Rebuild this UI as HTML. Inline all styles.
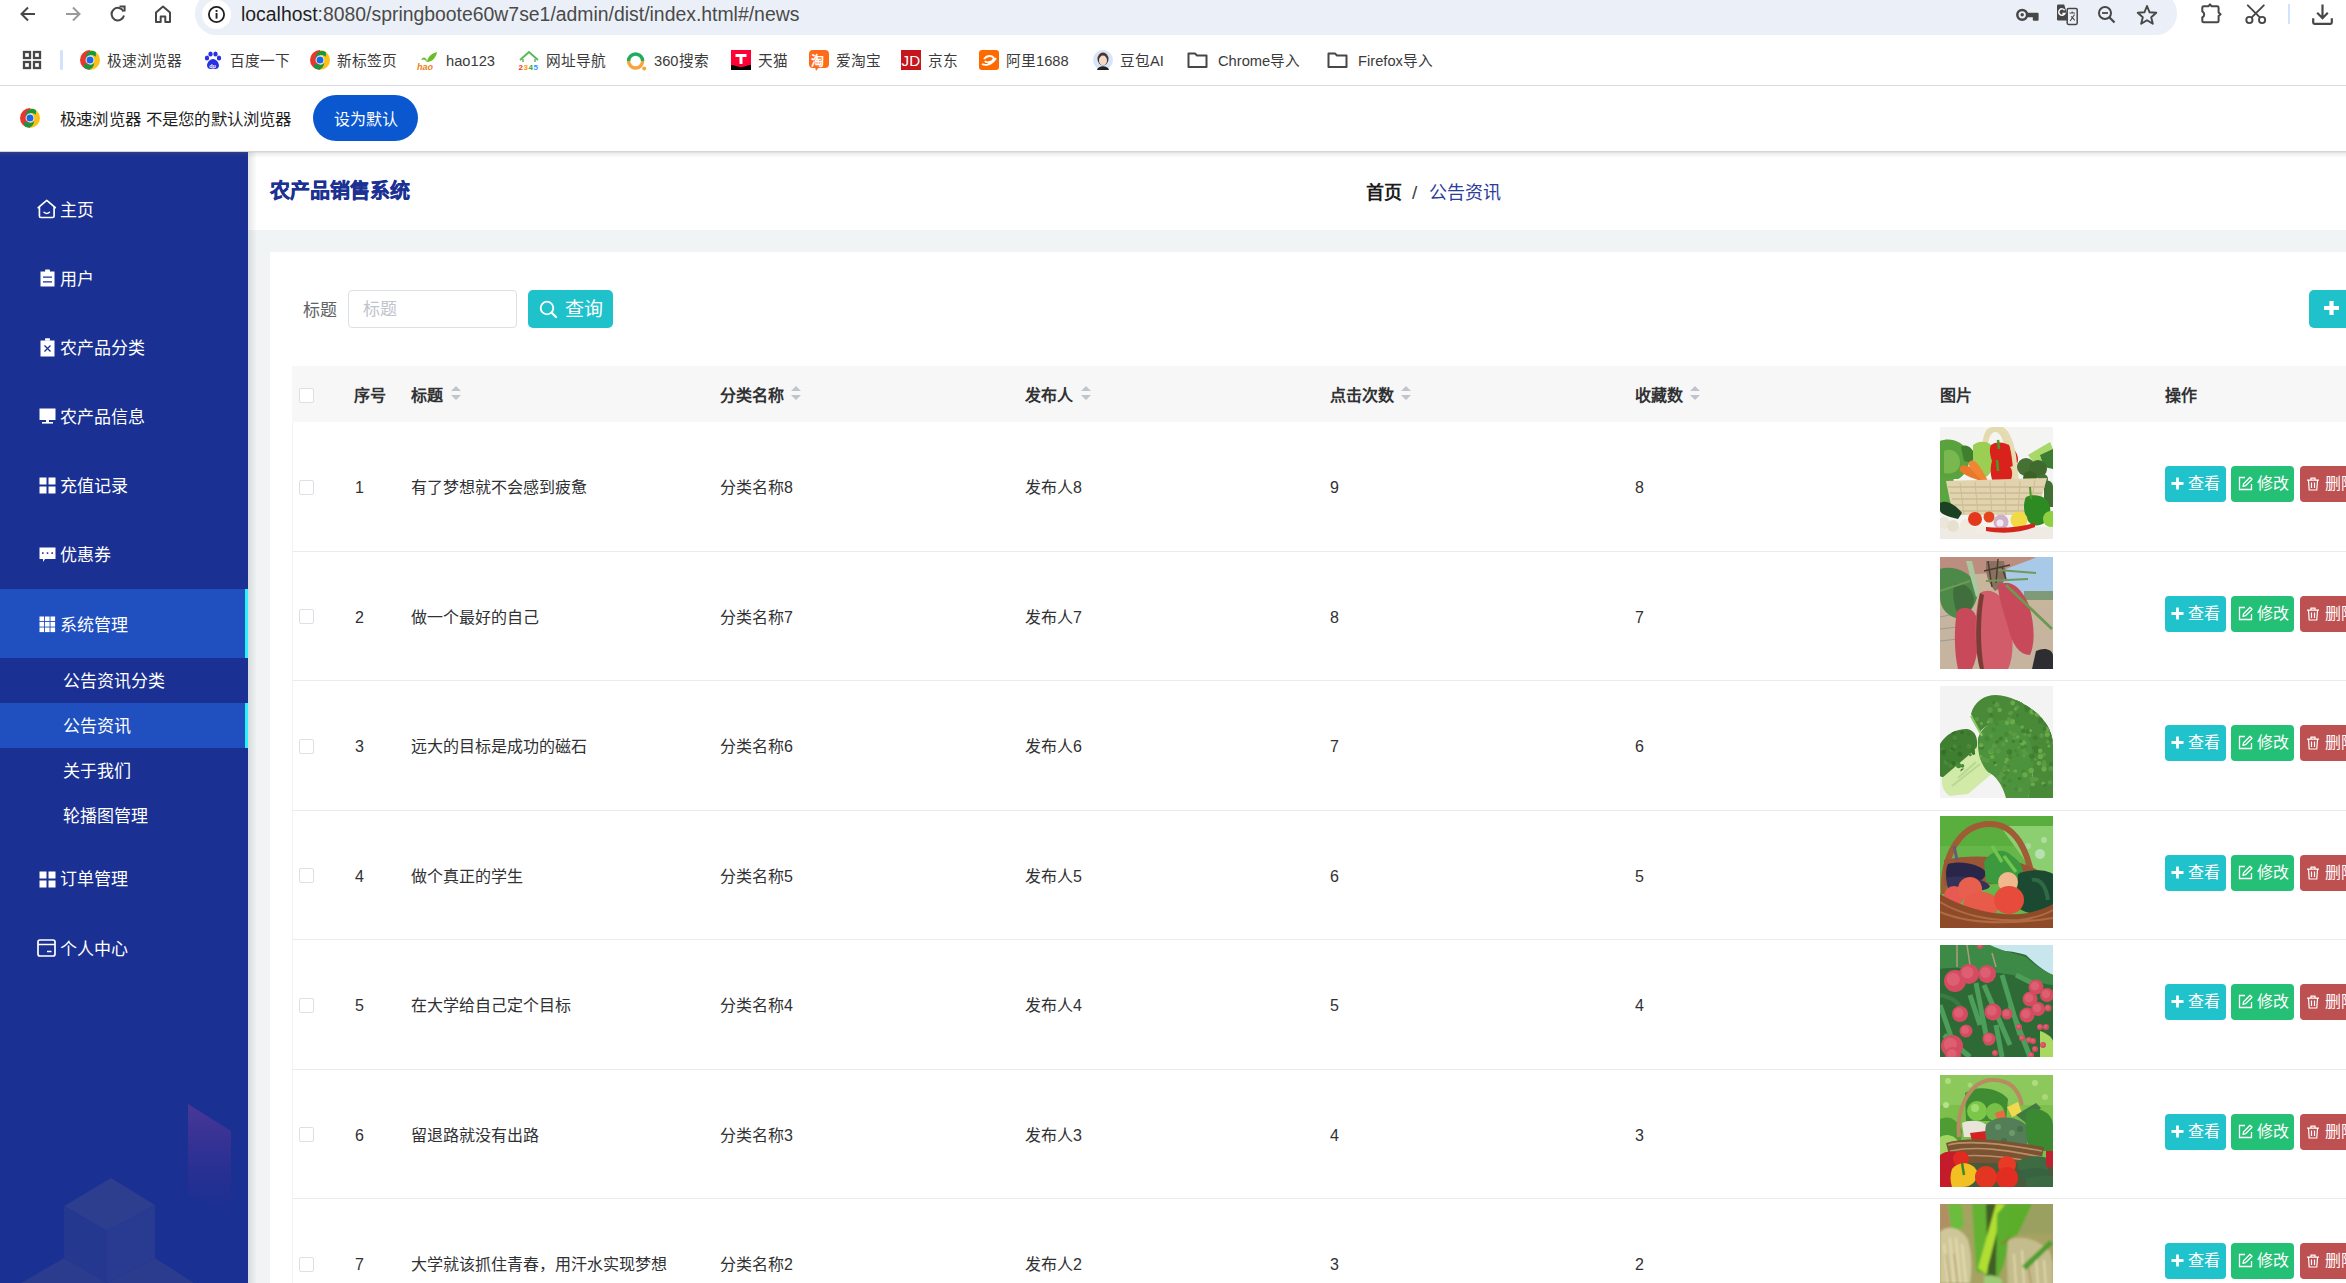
<!DOCTYPE html><html lang="zh-CN"><head><meta charset="utf-8"><title>news</title><style>
*{box-sizing:border-box;margin:0;padding:0}
html,body{width:2346px;height:1283px;overflow:hidden;background:#fff;font-family:"Liberation Sans",sans-serif;position:relative}
.a{position:absolute;white-space:nowrap}
svg{display:block}
#urlbar{left:195px;top:-8px;width:1982px;height:43px;background:#ebf0f8;border-radius:21px}
#infoc{left:202px;top:0px;width:29px;height:29px;border-radius:50%;background:#fff}
#url{left:241px;top:2px;font-size:19.4px;color:#2a2a2a;line-height:24px}
#bmline{left:0;top:85px;width:2346px;height:1px;background:#dadce0}
.bm{top:50.5px;font-size:14.7px;color:#3b3b3b;line-height:20px}
#infotxt{left:60px;top:107.5px;font-size:16.45px;letter-spacing:0.2px;color:#1f1f1f;line-height:22px}
#setdef{left:313px;top:95px;width:105px;height:46px;border-radius:23px;background:#0b57d0;color:#fff;font-size:16px;line-height:49px;text-align:center;overflow:hidden}
#shadow{left:0;top:151px;width:2346px;height:7px;background:linear-gradient(rgba(110,110,110,0.32),rgba(110,110,110,0.12) 35%,rgba(110,110,110,0))}
#side{left:0;top:152px;width:248px;height:1131px;background:#1a3092;overflow:hidden}
.mt{color:#fff;font-size:17px;line-height:22px}
#gray{left:248px;top:230px;width:2098px;height:1053px;background:#f1f4f5}
#hdr{left:248px;top:152px;width:2098px;height:78px;background:#fff}
#card{left:270px;top:252px;width:2076px;height:1031px;background:#fff}
#sideshadow{left:248px;top:152px;width:9px;height:1131px;background:linear-gradient(90deg,rgba(0,0,0,0.10),rgba(0,0,0,0))}
#title{left:270px;top:178px;font-size:20px;font-weight:900;color:#1b3193;line-height:26px;-webkit-text-stroke:0.45px #1b3193}
#bc{left:1366px;top:181px;font-size:18px;line-height:24px}
#inp{left:348px;top:290px;width:169px;height:38px;border:1px solid #dcdfe6;border-radius:4px;background:#fff}
.tbtn{background:#1fc2cb;border-radius:5px}
#thead{left:292px;top:366px;width:2054px;height:56px;background:#f7f7f7}
#tleft{left:292px;top:422px;width:1px;height:861px;background:#f2f2f2}
.th{top:385px;font-size:16px;font-weight:bold;color:#303133;line-height:22px}
.cb{width:15px;height:15px;border:1px solid #dcdfe6;border-radius:2px;background:#fff}
.rl{left:292px;width:2054px;height:1px;background:#ebebeb}
.td{font-size:16px;color:#303133;line-height:22px}
.ob{height:36px;border-radius:4px;color:#fff;font-size:16px;line-height:36px}
.ob1{background:#20c3cc;width:61px}
.ob2{background:#24c076;width:63px}
.ob3{background:#bd5151;width:60px}
.pic{width:113px;height:112px;overflow:hidden}
</style></head><body>
<div class="a" id="urlbar"></div>
<div class="a" id="infoc"></div>
<svg class="a" style="left:18px;top:4px" width="20" height="20" viewBox="0 0 20 20"><path d="M17 10H4M10 3.5L3.5 10L10 16.5" stroke="#474747" stroke-width="2" fill="none"/></svg>
<svg class="a" style="left:63px;top:4px" width="20" height="20" viewBox="0 0 20 20"><path d="M3 10H16M10 3.5L16.5 10L10 16.5" stroke="#9a9a9a" stroke-width="2" fill="none"/></svg>
<svg class="a" style="left:108px;top:4px" width="20" height="20" viewBox="0 0 20 20"><path d="M15.6 7.5A6.3 6.3 0 1 0 16 11.5" stroke="#474747" stroke-width="2" fill="none"/><path d="M11.5 2.5H16.6V7.6" stroke="#474747" stroke-width="2" fill="none"/></svg>
<svg class="a" style="left:153px;top:4px" width="20" height="20" viewBox="0 0 20 20"><path d="M3 18V8.5L10 2.5L17 8.5V18H12.3V12.5H7.7V18Z" stroke="#474747" stroke-width="2" fill="none" stroke-linejoin="round"/></svg>
<svg class="a" style="left:207px;top:5px" width="19" height="19" viewBox="0 0 19 19"><circle cx="9.5" cy="9.5" r="7.6" stroke="#1f1f1f" stroke-width="1.8" fill="none"/><rect x="8.6" y="8" width="1.9" height="5.6" fill="#1f1f1f"/><rect x="8.6" y="5" width="1.9" height="1.9" fill="#1f1f1f"/></svg>
<div class="a" id="url"><span style="color:#1f1f1f">localhost</span><span style="color:#4a4a4a">:8080/springboote60w7se1/admin/dist/index.html#/news</span></div>
<svg class="a" style="left:2015px;top:5px" width="26" height="20" viewBox="0 0 26 20"><circle cx="7.2" cy="9.8" r="4.9" stroke="#474747" stroke-width="2.5" fill="none"/><circle cx="7.2" cy="9.8" r="1.7" fill="#474747"/><path d="M11.5 7.7H22.6Q23.6 7.7 23.6 8.7V14.7Q23.6 15.7 22.6 15.7H18.8Q17.8 15.7 17.8 14.7V12.2H11.5Z" fill="#474747"/></svg>
<svg class="a" style="left:2056px;top:4px" width="22" height="24" viewBox="0 0 22 24"><path d="M2.2 0.6H8.2L13 16.4H2.2Q1 16.4 1 15.2V1.8Q1 0.6 2.2 0.6Z" fill="#474747"/><path d="M8.6 6.2A3.2 3.2 0 1 0 8.8 9.6H6.4" stroke="#fff" stroke-width="1.5" fill="none"/><rect x="11.2" y="4.4" width="10" height="16" rx="1.3" stroke="#474747" stroke-width="1.5" fill="#ebf0f8"/><path d="M13.5 9H19M16.2 7.6V9M14.2 17L18.5 10.5M15.2 12.4L18.8 16.4" stroke="#474747" stroke-width="1.1" fill="none"/></svg>
<svg class="a" style="left:2097px;top:5px" width="20" height="20" viewBox="0 0 20 20"><circle cx="8" cy="8" r="6" stroke="#474747" stroke-width="2" fill="none"/><path d="M12.3 12.3L17.5 17.5" stroke="#474747" stroke-width="2.2"/><path d="M5 8H11" stroke="#474747" stroke-width="1.8"/></svg>
<svg class="a" style="left:2136px;top:4px" width="22" height="22" viewBox="0 0 22 22"><path d="M11 2L13.6 8.3L20.3 8.8L15.2 13.2L16.8 19.8L11 16.3L5.2 19.8L6.8 13.2L1.7 8.8L8.4 8.3Z" stroke="#474747" stroke-width="1.9" fill="none" stroke-linejoin="round"/></svg>
<svg class="a" style="left:2199px;top:2px" width="24" height="22" viewBox="0 0 24 22"><path d="M4.7 4.3H9.3L11 2.3L12.7 4.3H18.2Q19.6 4.3 19.6 5.7V10.6L21.6 12.3L19.6 14V18.9Q19.6 20.3 18.2 20.3H4.7Q3.3 20.3 3.3 18.9V15.4Q5.2 14.2 5.2 12.4Q5.2 10.6 3.3 9.4V5.7Q3.3 4.3 4.7 4.3Z" stroke="#474747" stroke-width="2" fill="none" stroke-linejoin="round"/></svg>
<svg class="a" style="left:2243px;top:3px" width="25" height="23" viewBox="0 0 25 23"><path d="M4.8 2.3L16.6 14.1M20.8 2.3L9 14.1" stroke="#474747" stroke-width="1.9" stroke-linecap="round"/><circle cx="6.4" cy="17" r="3.1" stroke="#474747" stroke-width="1.9" fill="none"/><circle cx="19.1" cy="17" r="3.1" stroke="#474747" stroke-width="1.9" fill="none"/></svg>
<div class="a" style="left:2288px;top:4px;width:2px;height:20px;background:#d3e3fd"></div>
<svg class="a" style="left:2311px;top:3px" width="23" height="23" viewBox="0 0 23 23"><path d="M11.5 1.5V15M6.2 9.8L11.5 15.2L16.8 9.8" stroke="#474747" stroke-width="2.2" fill="none"/><path d="M2.2 15.2V19.6Q2.2 20.9 3.5 20.9H19.5Q20.8 20.9 20.8 19.6V15.2" stroke="#474747" stroke-width="2.2" fill="none"/></svg>
<svg class="a" style="left:22px;top:50px" width="20" height="20" viewBox="0 0 20 20"><g stroke="#474747" stroke-width="2.3" fill="none"><rect x="2" y="2" width="6" height="6"/><rect x="12" y="2" width="6" height="6"/><rect x="2" y="12" width="6" height="6"/><rect x="12" y="12" width="6" height="6"/></g></svg>
<div class="a" style="left:60px;top:50px;width:2.5px;height:20px;background:#d3e3fd;border-radius:1px"></div>
<svg class="a" style="left:80px;top:50px" width="20" height="20" viewBox="0 0 20 20"><path d="M10 0A10 10 0 0 0 10 20Z" fill="#e8372c"/><path d="M10 0A10 10 0 0 1 10 20Z" fill="#fbc118"/><path d="M5.6 9.4C5.4 5 7.5 2 11 1.1C13 0.7 15.2 1.4 16 2.4L15.8 6.8C14 5.2 11.5 4.6 9.5 5.2C7.8 5.8 6.4 7.5 5.6 9.4Z" fill="#109a47"/><path d="M4.2 13.2L4.4 17.9C6.5 19.4 9.5 19.6 11.4 18.5C13 17 14 15 14.3 12.9C13 14.2 11.5 14.7 10 14.7C8 14.7 6 14.2 4.2 13.2Z" fill="#109a47"/><circle cx="10" cy="10" r="4.4" fill="#fff"/><circle cx="10" cy="10" r="3.5" fill="#1a68e6"/></svg>
<div class="a bm" style="left:107px">极速浏览器</div>
<svg class="a" style="left:204px;top:51px" width="18" height="19" viewBox="0 0 18 19"><g fill="#2932e1"><ellipse cx="3" cy="7" rx="2.2" ry="2.6"/><ellipse cx="6.5" cy="3" rx="2.2" ry="2.6"/><ellipse cx="11.5" cy="3" rx="2.2" ry="2.6"/><ellipse cx="15" cy="7" rx="2.2" ry="2.6"/><path d="M9 8C5.5 8 3 12 3 14.5C3 17 5 18 6.5 18C7.5 18 8.2 17.6 9 17.6C9.8 17.6 10.5 18 11.5 18C13 18 15 17 15 14.5C15 12 12.5 8 9 8Z"/></g><text x="5.2" y="16.5" font-size="5.5" fill="#fff" font-family="Liberation Sans" font-weight="bold">du</text></svg>
<div class="a bm" style="left:230px">百度一下</div>
<svg class="a" style="left:310px;top:50px" width="20" height="20" viewBox="0 0 20 20"><path d="M10 0A10 10 0 0 0 10 20Z" fill="#e8372c"/><path d="M10 0A10 10 0 0 1 10 20Z" fill="#fbc118"/><path d="M5.6 9.4C5.4 5 7.5 2 11 1.1C13 0.7 15.2 1.4 16 2.4L15.8 6.8C14 5.2 11.5 4.6 9.5 5.2C7.8 5.8 6.4 7.5 5.6 9.4Z" fill="#109a47"/><path d="M4.2 13.2L4.4 17.9C6.5 19.4 9.5 19.6 11.4 18.5C13 17 14 15 14.3 12.9C13 14.2 11.5 14.7 10 14.7C8 14.7 6 14.2 4.2 13.2Z" fill="#109a47"/><circle cx="10" cy="10" r="4.4" fill="#fff"/><circle cx="10" cy="10" r="3.5" fill="#1a68e6"/></svg>
<div class="a bm" style="left:337px">新标签页</div>
<svg class="a" style="left:417px;top:50px" width="21" height="20" viewBox="0 0 21 20"><path d="M4 10C6 6 9 7 10 11C12 5 16 3 20 2C19 8 15 12 10 12C8 9 6 9 4 10Z" fill="#6bbd2b"/><text x="0" y="19.5" font-size="9" font-style="italic" font-weight="bold" fill="#f07d1a" font-family="Liberation Sans">hao</text></svg>
<div class="a bm" style="left:446px">hao123</div>
<svg class="a" style="left:518px;top:50px" width="22" height="21" viewBox="0 0 22 21"><path d="M2 10L11 2L20 10" stroke="#5cb85c" stroke-width="2" fill="none"/><path d="M5 9V12M17 9V12" stroke="#5cb85c" stroke-width="1.5"/><text x="0.5" y="20" font-size="8" font-weight="bold" fill="#e33" font-family="Liberation Sans">2</text><text x="5.5" y="20" font-size="8" font-weight="bold" fill="#f90" font-family="Liberation Sans">3</text><text x="10.5" y="20" font-size="8" font-weight="bold" fill="#3a3" font-family="Liberation Sans">4</text><text x="15.5" y="20" font-size="8" font-weight="bold" fill="#39f" font-family="Liberation Sans">5</text></svg>
<div class="a bm" style="left:546px">网址导航</div>
<svg class="a" style="left:626px;top:51px" width="21" height="21" viewBox="0 0 21 21"><path d="M2.6 10A7 7 0 0 1 16.6 10" stroke="#1fae5c" stroke-width="3.4" fill="none"/><path d="M16.6 10A7 7 0 0 1 2.6 10" stroke="#f7a43a" stroke-width="3.4" fill="none"/><circle cx="18.2" cy="17.6" r="2" fill="#f7a43a"/></svg>
<div class="a bm" style="left:654px">360搜索</div>
<svg class="a" style="left:731px;top:50px" width="20" height="20" viewBox="0 0 20 20"><rect width="20" height="20" fill="#ff0036"/><path d="M0 15C4 15 6 17 10 17C14 17 16 15 20 15V20H0Z" fill="#000"/><path d="M4.5 4H15.5V7H11.5V14H8.5V7H4.5Z" fill="#fff"/></svg>
<div class="a bm" style="left:758px">天猫</div>
<svg class="a" style="left:809px;top:50px" width="20" height="21" viewBox="0 0 20 21"><rect x="0" y="0" width="20" height="18" rx="4" fill="#ff6a1b"/><path d="M6 17L7 21L10 17Z" fill="#ff6a1b"/><text x="2" y="14.5" font-size="13" font-weight="bold" fill="#fff">淘</text></svg>
<div class="a bm" style="left:836px">爱淘宝</div>
<svg class="a" style="left:901px;top:50px" width="20" height="20" viewBox="0 0 20 20"><rect width="20" height="20" fill="#c4161c"/><text x="0.6" y="16.2" font-size="14.5" fill="#fff" font-family="Liberation Sans" textLength="18.5" lengthAdjust="spacingAndGlyphs">JD</text></svg>
<div class="a bm" style="left:928px">京东</div>
<svg class="a" style="left:979px;top:50px" width="20" height="20" viewBox="0 0 20 20"><rect width="20" height="20" rx="3" fill="#ff6a00"/><path d="M3 14C6 16 13 15 17 8M5 9C8 5 14 5 15 9C12 13 7 13 6 11" stroke="#fff" stroke-width="1.8" fill="none"/></svg>
<div class="a bm" style="left:1006px">阿里1688</div>
<svg class="a" style="left:1093px;top:50px" width="20" height="20" viewBox="0 0 20 20"><circle cx="10" cy="10" r="10" fill="#d5e6fa"/><ellipse cx="10" cy="9" rx="5.5" ry="6.5" fill="#4a3328"/><ellipse cx="10" cy="10.5" rx="4" ry="5" fill="#f3d9c8"/><path d="M4 20C5 15 15 15 16 20Z" fill="#222"/></svg>
<div class="a bm" style="left:1120px">豆包AI</div>
<svg class="a" style="left:1187px;top:51px" width="21" height="18" viewBox="0 0 21 18"><path d="M1.5 2.5H8L10 4.5H19.5V16H1.5Z" stroke="#474747" stroke-width="2" fill="none" stroke-linejoin="round"/></svg>
<div class="a bm" style="left:1218px">Chrome导入</div>
<svg class="a" style="left:1327px;top:51px" width="21" height="18" viewBox="0 0 21 18"><path d="M1.5 2.5H8L10 4.5H19.5V16H1.5Z" stroke="#474747" stroke-width="2" fill="none" stroke-linejoin="round"/></svg>
<div class="a bm" style="left:1358px">Firefox导入</div>
<div class="a" id="bmline"></div>
<svg class="a" style="left:20px;top:108px" width="20" height="20" viewBox="0 0 20 20"><path d="M10 0A10 10 0 0 0 10 20Z" fill="#e8372c"/><path d="M10 0A10 10 0 0 1 10 20Z" fill="#fbc118"/><path d="M5.6 9.4C5.4 5 7.5 2 11 1.1C13 0.7 15.2 1.4 16 2.4L15.8 6.8C14 5.2 11.5 4.6 9.5 5.2C7.8 5.8 6.4 7.5 5.6 9.4Z" fill="#109a47"/><path d="M4.2 13.2L4.4 17.9C6.5 19.4 9.5 19.6 11.4 18.5C13 17 14 15 14.3 12.9C13 14.2 11.5 14.7 10 14.7C8 14.7 6 14.2 4.2 13.2Z" fill="#109a47"/><circle cx="10" cy="10" r="4.4" fill="#fff"/><circle cx="10" cy="10" r="3.5" fill="#1a68e6"/></svg>
<div class="a" id="infotxt">极速浏览器 不是您的默认浏览器</div>
<div class="a" id="setdef">设为默认</div>
<div class="a" id="gray"></div>
<div class="a" id="hdr"></div>
<div class="a" id="card"></div>
<div class="a" id="side"><svg class="a" style="left:0;top:0" width="248" height="1131" viewBox="0 152 248 1131">
<defs><linearGradient id="pg" x1="0" y1="0" x2="0" y2="1"><stop offset="0" stop-color="#5a3a9a" stop-opacity="0.75"/><stop offset="1" stop-color="#3a2a90" stop-opacity="0"/></linearGradient></defs>
<path d="M188 1104L231 1131V1218L188 1195Z" fill="url(#pg)"/>
<path d="M111 1178L155 1205L107 1231L64 1206Z" fill="#2d3e8e"/>
<path d="M64 1206L107 1231V1283L64 1258Z" fill="#25388f"/>
<path d="M107 1231L155 1205V1258L107 1283Z" fill="#293b90"/>
<path d="M21 1283L64 1258L107 1283Z" fill="#2b3c8e"/>
<path d="M107 1283L155 1258L194 1283Z" fill="#2b3c8e"/>
</svg><div class="a" style="left:0;top:437px;width:248px;height:69px;background:#2050c0"></div><div class="a" style="left:245px;top:437px;width:3px;height:69px;background:#2af2f8"></div><div class="a" style="left:0;top:551px;width:248px;height:45px;background:#2050c0"></div><div class="a" style="left:245px;top:551px;width:3px;height:45px;background:#2af2f8"></div><div class="a" style="left:37.3px;top:47px"><svg width="19.5" height="19.5" viewBox="0 0 21 21"><path d="M1.3 9.3L10.5 1.4L19.7 9.3M2.6 8.3V18.3Q2.6 19.9 4.2 19.9H16.8Q18.4 19.9 18.4 18.3V8.3" stroke="#fff" stroke-width="1.8" fill="none" stroke-linejoin="round" stroke-linecap="round"/><path d="M7.6 14.3Q10.5 16.9 13.4 14.3" stroke="#fff" stroke-width="1.7" fill="none" stroke-linecap="round"/></svg></div><div class="a mt" style="left:60px;top:48px">主页</div><div class="a" style="left:39px;top:117px"><svg width="17" height="18" viewBox="0 0 17 18"><path d="M1.5 2.5H15.5V17.5H1.5Z" fill="#fff"/><rect x="6" y="0.5" width="5" height="2.5" rx="0.8" fill="#fff"/><path d="M4 8.2H13M4 12.8H13" stroke="#1a3092" stroke-width="1.3"/></svg></div><div class="a mt" style="left:60px;top:117px">用户</div><div class="a" style="left:39px;top:186px"><svg width="17" height="19" viewBox="0 0 17 19"><path d="M1.5 2.5H15.5V18.5H1.5Z" fill="#fff"/><rect x="6" y="0.3" width="5" height="2.5" rx="0.8" fill="#fff"/><path d="M5.5 7.5L11.5 13.5M11.5 7.5L5.5 13.5" stroke="#1a3092" stroke-width="1.3"/></svg></div><div class="a mt" style="left:60px;top:186px">农产品分类</div><div class="a" style="left:39px;top:256px"><svg width="17" height="17" viewBox="0 0 17 17"><rect x="0.5" y="0.5" width="16" height="11.5" fill="#fff"/><rect x="7" y="12" width="3" height="2" fill="#fff"/><rect x="3" y="14" width="11" height="1.6" fill="#fff"/></svg></div><div class="a mt" style="left:60px;top:255px">农产品信息</div><div class="a" style="left:39px;top:325px"><svg width="17" height="17" viewBox="0 0 17 17"><g fill="#fff"><rect x="0.5" y="0.5" width="7" height="7"/><rect x="9.5" y="0.5" width="7" height="7"/><rect x="0.5" y="9.5" width="7" height="7"/><rect x="9.5" y="9.5" width="7" height="7"/></g></svg></div><div class="a mt" style="left:60px;top:324px">充值记录</div><div class="a" style="left:39px;top:395px"><svg width="17" height="17" viewBox="0 0 17 17"><path d="M0.5 0.5H16.5V12H6L4 15V12H0.5Z" fill="#fff"/><g fill="#1a3092"><rect x="3" y="5.3" width="1.6" height="1.6"/><rect x="7.7" y="5.3" width="1.6" height="1.6"/><rect x="12.4" y="5.3" width="1.6" height="1.6"/></g></svg></div><div class="a mt" style="left:60px;top:393px">优惠券</div><div class="a" style="left:39px;top:464px"><svg width="17" height="17" viewBox="0 0 17 17"><g fill="#fff"><rect x="0.5" y="0.5" width="4.6" height="4.6"/><rect x="0.5" y="6.0" width="4.6" height="4.6"/><rect x="0.5" y="11.5" width="4.6" height="4.6"/><rect x="6.0" y="0.5" width="4.6" height="4.6"/><rect x="6.0" y="6.0" width="4.6" height="4.6"/><rect x="6.0" y="11.5" width="4.6" height="4.6"/><rect x="11.5" y="0.5" width="4.6" height="4.6"/><rect x="11.5" y="6.0" width="4.6" height="4.6"/><rect x="11.5" y="11.5" width="4.6" height="4.6"/></g></svg></div><div class="a mt" style="left:60px;top:463px">系统管理</div><div class="a mt" style="left:63px;top:519px">公告资讯分类</div><div class="a mt" style="left:63px;top:564px">公告资讯</div><div class="a mt" style="left:63px;top:609px">关于我们</div><div class="a mt" style="left:63px;top:654px">轮播图管理</div><div class="a" style="left:39px;top:718.5px"><svg width="17" height="17" viewBox="0 0 17 17"><g fill="#fff"><rect x="0.5" y="0.5" width="7" height="7"/><rect x="9.5" y="0.5" width="7" height="7"/><rect x="0.5" y="9.5" width="7" height="7"/><rect x="9.5" y="9.5" width="7" height="7"/></g></svg></div><div class="a mt" style="left:60px;top:717px">订单管理</div><div class="a" style="left:37px;top:787px"><svg width="19" height="18" viewBox="0 0 19 18"><rect x="1" y="1" width="17" height="16" rx="2" stroke="#fff" stroke-width="1.7" fill="none"/><path d="M1 5.5H18M10 12.5H14.5" stroke="#fff" stroke-width="1.5"/></svg></div><div class="a mt" style="left:60px;top:787px">个人中心</div></div>
<div class="a" id="sideshadow"></div>
<div class="a" id="shadow"></div>
<div class="a" id="title">农产品销售系统</div>
<div class="a" id="bc"><b style="color:#1b1b1b">首页</b><span style="color:#404040;margin:0 12px 0 10px;font-size:19px">/</span><span style="color:#2b3c9c">公告资讯</span></div>
<div class="a" style="left:303px;top:300px;font-size:17px;color:#606266;line-height:22px">标题</div>
<div class="a" id="inp"></div>
<div class="a" style="left:363px;top:298.5px;font-size:17px;color:#c0c4cc;line-height:22px">标题</div>
<div class="a tbtn" style="left:528px;top:290px;width:85px;height:38px"></div>
<svg class="a" style="left:538.5px;top:300px" width="20" height="20" viewBox="0 0 20 20"><circle cx="8" cy="8" r="6.3" stroke="#fff" stroke-width="1.8" fill="none"/><path d="M12.5 12.5L17 17" stroke="#fff" stroke-width="2.2" stroke-linecap="round"/></svg>
<div class="a" style="left:565px;top:298px;font-size:19px;color:#fff;line-height:24px">查询</div>
<div class="a tbtn" style="left:2309px;top:290px;width:60px;height:38px"></div>
<svg class="a" style="left:2324px;top:301px" width="15" height="14" viewBox="0 0 15 14"><path d="M7.5 0V14M0 7H15" stroke="#fff" stroke-width="4.2"/></svg>
<div class="a" id="thead"></div>
<div class="a" id="tleft"></div>
<div class="a cb" style="left:299px;top:388px"></div>
<div class="a th" style="left:354px">序号</div>
<div class="a th" style="left:411px">标题</div>
<svg class="a" style="left:451px;top:386px" width="10" height="15" viewBox="0 0 10 15"><path d="M5 0L10 5H0Z M0 9H10L5 14Z" fill="#c0c4cc"/></svg>
<div class="a th" style="left:720px">分类名称</div>
<svg class="a" style="left:791px;top:386px" width="10" height="15" viewBox="0 0 10 15"><path d="M5 0L10 5H0Z M0 9H10L5 14Z" fill="#c0c4cc"/></svg>
<div class="a th" style="left:1025px">发布人</div>
<svg class="a" style="left:1081px;top:386px" width="10" height="15" viewBox="0 0 10 15"><path d="M5 0L10 5H0Z M0 9H10L5 14Z" fill="#c0c4cc"/></svg>
<div class="a th" style="left:1330px">点击次数</div>
<svg class="a" style="left:1401px;top:386px" width="10" height="15" viewBox="0 0 10 15"><path d="M5 0L10 5H0Z M0 9H10L5 14Z" fill="#c0c4cc"/></svg>
<div class="a th" style="left:1635px">收藏数</div>
<svg class="a" style="left:1690px;top:386px" width="10" height="15" viewBox="0 0 10 15"><path d="M5 0L10 5H0Z M0 9H10L5 14Z" fill="#c0c4cc"/></svg>
<div class="a th" style="left:1940px">图片</div>
<div class="a th" style="left:2165px">操作</div>
<div class="a cb" style="left:299px;top:479.5px"></div>
<div class="a td" style="left:355px;top:477.0px">1</div>
<div class="a td" style="left:411px;top:477.0px">有了梦想就不会感到疲惫</div>
<div class="a td" style="left:720px;top:477.0px">分类名称8</div>
<div class="a td" style="left:1025px;top:477.0px">发布人8</div>
<div class="a td" style="left:1330px;top:477.0px">9</div>
<div class="a td" style="left:1635px;top:477.0px">8</div>
<div class="a pic" style="left:1940px;top:427.0px"><svg width="113" height="112" viewBox="0 0 113 112"><defs><filter id="b1" x="-5%" y="-5%" width="110%" height="110%"><feGaussianBlur stdDeviation="0.6"/></filter></defs><rect width="113" height="112" fill="#f4f4f2"/><g filter="url(#b1)"><rect x="0" y="100" width="113" height="12" fill="#efebe4"/><path d="M43 20C42 8 46 1 52 0H62C68 2 72 10 74 30L78 58H70L66 28C64 12 60 5 55 5C50 6 48 12 48 22Z" fill="#e4dab0"/><path d="M0 14C10 10 22 14 28 24C32 36 26 48 18 52H0Z" fill="#5aa23e"/><path d="M4 24C12 20 20 26 20 36C20 44 12 48 4 46Z" fill="#7ab850"/><path d="M0 50H14L10 82H0Z" fill="#5aa540"/><path d="M21 20C26 16 32 20 35 28L32 36L24 34Z" fill="#3f7f2e"/><path d="M33 18C40 12 52 14 55 24C56 36 52 46 46 50C38 50 33 40 33 30Z" fill="#9acf52"/><path d="M20 40C24 36 30 38 46 52L44 55C34 52 24 48 20 44Z" fill="#e8782a"/><path d="M29 35C33 31 38 34 48 54L45 56C38 50 30 42 29 38Z" fill="#f08636"/><path d="M51 18C56 14 66 15 72 20C78 26 80 34 76 38L70 40C74 44 72 54 68 57H54C50 50 50 40 52 34C50 28 49 22 51 18Z" fill="#d9231a"/><path d="M58 13L59 22M57 33L58 44" stroke="#4a9a2a" stroke-width="2.5"/><path d="M62 2C68 6 72 16 74 30L77 56" stroke="#e6dcb4" stroke-width="4.5" fill="none"/><path d="M88 28L110 15L113 22V30L94 36Z" fill="#a8d86a"/><path d="M100 28L113 22V42L104 40Z" fill="#3d7d33"/><circle cx="86" cy="40" r="9" fill="#466f34"/><circle cx="98" cy="42" r="9" fill="#3f6a2f"/><circle cx="90" cy="51" r="7" fill="#3a6428"/><circle cx="103" cy="52" r="5" fill="#466f34"/><path d="M104 54C110 52 113 56 113 60V80H104Z" fill="#3f7030"/><path d="M6 54L107 51L100 76L90 88H16L10 74Z" fill="#e0d3ae"/><path d="M8 60H105M10 66H102M12 72H100M14 78H96M16 84H92" stroke="#c2b088" stroke-width="1"/><path d="M20 56L24 88M35 55L38 88M50 55L52 88M65 55L66 88M80 54L78 88M95 53L90 84" stroke="#cdbd94" stroke-width="1"/><path d="M86 70C94 66 108 68 110 80C112 94 102 100 92 98C84 92 82 78 86 70Z" fill="#2e8a24"/><path d="M90 60L91 72" stroke="#4a9a2a" stroke-width="2"/><circle cx="111" cy="92" r="8" fill="#8fd040"/><path d="M0 76C6 72 16 78 22 86L18 92C10 90 2 88 0 84Z" fill="#1f4024"/><circle cx="4" cy="96" r="6" fill="#ece6da"/><circle cx="13" cy="99" r="6" fill="#e8e0cf"/><circle cx="26" cy="98" r="6" fill="#f0eadf"/><circle cx="40" cy="102" r="5" fill="#f2ede2"/><circle cx="35" cy="92" r="7" fill="#e3391f"/><circle cx="49" cy="90" r="5.5" fill="#e4441f"/><circle cx="61" cy="95" r="7.5" fill="#cfb0c8"/><circle cx="60" cy="96" r="3.5" fill="#f4e8f0"/><circle cx="79" cy="93" r="8.5" fill="#f2da46"/><path d="M46 100C62 102 80 100 95 96V100C80 106 62 107 46 104Z" fill="#d4261a"/></g></svg></div>
<div class="a ob ob1" style="left:2165px;top:466.0px"><span class="a" style="left:6px;top:11px"><svg width="13" height="13" viewBox="0 0 13 13"><path d="M6.5 0.5V12.5M0.5 6.5H12.5" stroke="#fff" stroke-width="2.8"/></svg></span><span class="a" style="left:23px;top:0">查看</span></div>
<div class="a ob ob2" style="left:2231px;top:466.0px"><span class="a" style="left:7px;top:10px"><svg width="15" height="15" viewBox="0 0 15 15"><path d="M7 1.5H1.5V13.5H13.5V8" stroke="#fff" stroke-width="1.3" fill="none"/><path d="M12 1.2L14 3.2L7.5 9.7L5 10.3L5.6 7.7Z" stroke="#fff" stroke-width="1.3" fill="none" stroke-linejoin="round"/></svg></span><span class="a" style="left:26px;top:0">修改</span></div>
<div class="a ob ob3" style="left:2300px;top:466.0px"><span class="a" style="left:6px;top:11px"><svg width="14" height="14" viewBox="0 0 14 14"><path d="M1 3.2H13M5 3V1.2H9V3M2.5 3.5L3.2 13H10.8L11.5 3.5M5.5 5.5V11M8.5 5.5V11" stroke="#fff" stroke-width="1.2" fill="none"/></svg></span><span class="a" style="left:25px;top:0">删除</span></div>
<div class="a rl" style="top:550.5px"></div>
<div class="a cb" style="left:299px;top:609.0px"></div>
<div class="a td" style="left:355px;top:606.5px">2</div>
<div class="a td" style="left:411px;top:606.5px">做一个最好的自己</div>
<div class="a td" style="left:720px;top:606.5px">分类名称7</div>
<div class="a td" style="left:1025px;top:606.5px">发布人7</div>
<div class="a td" style="left:1330px;top:606.5px">8</div>
<div class="a td" style="left:1635px;top:606.5px">7</div>
<div class="a pic" style="left:1940px;top:556.5px"><svg width="113" height="112" viewBox="0 0 113 112"><defs><filter id="b2" x="-5%" y="-5%" width="110%" height="110%"><feGaussianBlur stdDeviation="0.7"/></filter></defs><rect width="113" height="112" fill="#c8b69c"/><g filter="url(#b2)"><rect x="60" y="0" width="53" height="42" fill="#a9c9e9"/><rect x="84" y="34" width="29" height="9" fill="#7f9a78"/><rect x="0" y="50" width="113" height="62" fill="#c6b49e"/><path d="M0 60L20 56M0 72L18 70M0 84L18 82" stroke="#9a9a9a" stroke-width="1.2"/><path d="M0 0H96C90 4 74 8 62 14C50 18 30 16 0 20Z" fill="#bc8e80"/><path d="M0 12C12 8 30 14 37 28C40 42 32 56 20 62C8 60 0 52 0 40Z" fill="#4e8a48"/><path d="M14 28C22 24 32 30 34 42C34 52 26 58 18 58C14 50 12 38 14 28Z" fill="#3f6e3c"/><path d="M26 4L32 4L40 38L36 40Z" fill="#a9c8a2"/><path d="M46 4H64L66 18C64 26 60 32 55 34C50 28 46 20 46 10Z" fill="#8a7060"/><path d="M48 4L52 30M58 2L56 26M62 10L66 22M44 14L70 8" stroke="#4a3a2e" stroke-width="1.4"/><path d="M17 54C24 48 34 50 37 62C40 80 38 100 32 112H18C14 96 14 70 17 54Z" fill="#c84a5a"/><path d="M40 36C50 30 62 36 68 54C74 76 74 100 68 112H40C34 90 34 56 40 36Z" fill="#d25c6a"/><path d="M40 36C36 56 34 90 40 112H44C40 90 40 60 44 38Z" fill="#7a3e36"/><path d="M58 28C68 22 80 28 88 46C94 62 96 86 90 98C80 98 72 88 68 70C64 56 58 40 58 28Z" fill="#c84a5a"/><path d="M58 13L96 16M46 24L88 22M0 34L30 24" stroke="#6e9a54" stroke-width="2"/><path d="M66 28L112 72" stroke="#6a9a50" stroke-width="2.8"/><path d="M96 94C104 90 112 92 113 98V112H92Z" fill="#2e2e32"/></g></svg></div>
<div class="a ob ob1" style="left:2165px;top:595.5px"><span class="a" style="left:6px;top:11px"><svg width="13" height="13" viewBox="0 0 13 13"><path d="M6.5 0.5V12.5M0.5 6.5H12.5" stroke="#fff" stroke-width="2.8"/></svg></span><span class="a" style="left:23px;top:0">查看</span></div>
<div class="a ob ob2" style="left:2231px;top:595.5px"><span class="a" style="left:7px;top:10px"><svg width="15" height="15" viewBox="0 0 15 15"><path d="M7 1.5H1.5V13.5H13.5V8" stroke="#fff" stroke-width="1.3" fill="none"/><path d="M12 1.2L14 3.2L7.5 9.7L5 10.3L5.6 7.7Z" stroke="#fff" stroke-width="1.3" fill="none" stroke-linejoin="round"/></svg></span><span class="a" style="left:26px;top:0">修改</span></div>
<div class="a ob ob3" style="left:2300px;top:595.5px"><span class="a" style="left:6px;top:11px"><svg width="14" height="14" viewBox="0 0 14 14"><path d="M1 3.2H13M5 3V1.2H9V3M2.5 3.5L3.2 13H10.8L11.5 3.5M5.5 5.5V11M8.5 5.5V11" stroke="#fff" stroke-width="1.2" fill="none"/></svg></span><span class="a" style="left:25px;top:0">删除</span></div>
<div class="a rl" style="top:680.0px"></div>
<div class="a cb" style="left:299px;top:738.5px"></div>
<div class="a td" style="left:355px;top:736.0px">3</div>
<div class="a td" style="left:411px;top:736.0px">远大的目标是成功的磁石</div>
<div class="a td" style="left:720px;top:736.0px">分类名称6</div>
<div class="a td" style="left:1025px;top:736.0px">发布人6</div>
<div class="a td" style="left:1330px;top:736.0px">7</div>
<div class="a td" style="left:1635px;top:736.0px">6</div>
<div class="a pic" style="left:1940px;top:686.0px"><svg width="113" height="112" viewBox="0 0 113 112"><defs><filter id="b3" x="-5%" y="-5%" width="110%" height="110%"><feGaussianBlur stdDeviation="0.6"/></filter></defs><rect width="113" height="112" fill="#f3f3f3"/><g filter="url(#b3)"><path d="M31 28C34 16 44 9 56 9C70 10 84 16 98 28C108 38 113 48 113 60V112H88L93 88C93 70 88 50 74 40C60 32 46 38 40 46Z" fill="#4a8a38"/><path d="M0 58C6 48 16 43 27 43C34 44 38 50 37 60C36 72 28 82 16 88C8 92 2 92 0 90Z" fill="#3f7e30"/><path d="M2 92L30 68L40 58L54 86L28 108L10 110C3 106 1 98 2 92Z" fill="#d2eaa8"/><path d="M12 100L40 78M18 92L36 76" stroke="#b8d890" stroke-width="2"/><path d="M38 52C42 40 54 33 68 34C82 38 92 52 93 70C94 86 92 100 88 112H66C62 98 56 90 48 86C40 78 37 64 38 52Z" fill="#4e923c"/><clipPath id="c3"><path d="M31 28C34 16 44 9 56 9C70 10 84 16 98 28C108 38 113 48 113 60V112H88L93 88C93 70 88 50 74 40C60 32 46 38 40 46Z"/><path d="M38 52C42 40 54 33 68 34C82 38 92 52 93 70C94 86 92 100 88 112H66C62 98 56 90 48 86C40 78 37 64 38 52Z"/><path d="M0 58C6 48 16 43 27 43C34 44 38 50 37 60C36 72 28 82 16 88C8 92 2 92 0 90Z"/></clipPath><g clip-path="url(#c3)"><circle cx="51.0" cy="65.4" r="2.7" fill="#6aaa4a"/><circle cx="69.9" cy="69.1" r="2.7" fill="#5a9a44"/><circle cx="69.5" cy="66.1" r="2.8" fill="#3f7e30"/><circle cx="69.6" cy="94.6" r="2.0" fill="#478a36"/><circle cx="100.9" cy="34.2" r="2.6" fill="#3f7e30"/><circle cx="73.9" cy="85.1" r="1.7" fill="#5a9a44"/><circle cx="94.4" cy="93.4" r="2.1" fill="#6aaa4a"/><circle cx="63.6" cy="91.1" r="2.8" fill="#478a36"/><circle cx="42.7" cy="47.6" r="1.7" fill="#5a9a44"/><circle cx="66.9" cy="73.7" r="2.0" fill="#6aaa4a"/><circle cx="98.7" cy="68.4" r="2.3" fill="#478a36"/><circle cx="104.3" cy="79.2" r="2.6" fill="#5a9a44"/><circle cx="111.3" cy="78.1" r="2.4" fill="#3f7e30"/><circle cx="58.1" cy="65.2" r="2.4" fill="#5a9a44"/><circle cx="48.9" cy="94.2" r="1.9" fill="#6aaa4a"/><circle cx="96.0" cy="52.0" r="1.5" fill="#3f7e30"/><circle cx="66.2" cy="52.5" r="1.6" fill="#5a9a44"/><circle cx="81.2" cy="15.5" r="2.2" fill="#6aaa4a"/><circle cx="105.8" cy="38.9" r="2.8" fill="#3f7e30"/><circle cx="56.8" cy="18.7" r="2.7" fill="#5a9a44"/><circle cx="109.7" cy="40.2" r="1.7" fill="#6aaa4a"/><circle cx="57.1" cy="106.9" r="2.0" fill="#478a36"/><circle cx="101.6" cy="49.6" r="2.3" fill="#5a9a44"/><circle cx="107.2" cy="61.7" r="2.3" fill="#478a36"/><circle cx="67.0" cy="36.8" r="2.2" fill="#6aaa4a"/><circle cx="78.4" cy="13.0" r="1.6" fill="#3f7e30"/><circle cx="82.2" cy="57.6" r="2.3" fill="#6aaa4a"/><circle cx="54.3" cy="60.0" r="2.7" fill="#5a9a44"/><circle cx="82.2" cy="40.9" r="1.7" fill="#6aaa4a"/><circle cx="46.8" cy="86.8" r="1.9" fill="#6aaa4a"/><circle cx="62.2" cy="88.2" r="2.8" fill="#5a9a44"/><circle cx="86.7" cy="24.1" r="2.3" fill="#3f7e30"/><circle cx="53.6" cy="43.8" r="2.3" fill="#478a36"/><circle cx="39.8" cy="71.1" r="2.4" fill="#6aaa4a"/><circle cx="50.0" cy="92.0" r="1.6" fill="#3f7e30"/><circle cx="91.4" cy="32.8" r="1.9" fill="#478a36"/><circle cx="108.6" cy="42.5" r="2.6" fill="#3f7e30"/><circle cx="59.2" cy="93.8" r="2.5" fill="#5a9a44"/><circle cx="59.6" cy="24.0" r="2.2" fill="#6aaa4a"/><circle cx="100.0" cy="57.5" r="1.9" fill="#478a36"/><circle cx="77.5" cy="14.6" r="1.7" fill="#478a36"/><circle cx="102.4" cy="109.7" r="2.2" fill="#478a36"/><circle cx="110.9" cy="82.7" r="2.5" fill="#5a9a44"/><circle cx="98.9" cy="77.3" r="2.2" fill="#6aaa4a"/><circle cx="103.2" cy="97.2" r="1.7" fill="#6aaa4a"/><circle cx="96.2" cy="62.2" r="2.7" fill="#3f7e30"/><circle cx="104.0" cy="68.7" r="2.1" fill="#5a9a44"/><circle cx="41.7" cy="61.3" r="2.4" fill="#3f7e30"/><circle cx="74.0" cy="52.4" r="1.9" fill="#5a9a44"/><circle cx="52.2" cy="97.2" r="2.6" fill="#478a36"/><circle cx="36.9" cy="33.1" r="2.2" fill="#5a9a44"/><circle cx="97.3" cy="28.1" r="2.7" fill="#6aaa4a"/><circle cx="96.5" cy="93.3" r="2.1" fill="#5a9a44"/><circle cx="77.7" cy="51.0" r="1.8" fill="#6aaa4a"/><circle cx="81.4" cy="63.0" r="2.1" fill="#5a9a44"/><circle cx="110.0" cy="96.4" r="2.2" fill="#5a9a44"/><circle cx="71.2" cy="26.7" r="2.0" fill="#5a9a44"/><circle cx="83.8" cy="69.7" r="1.8" fill="#6aaa4a"/><circle cx="111.0" cy="53.9" r="2.2" fill="#3f7e30"/><circle cx="89.3" cy="49.0" r="2.2" fill="#5a9a44"/><circle cx="84.0" cy="65.1" r="2.3" fill="#5a9a44"/><circle cx="66.5" cy="48.2" r="2.5" fill="#478a36"/><circle cx="57.2" cy="106.0" r="2.1" fill="#478a36"/><circle cx="51.6" cy="64.6" r="2.5" fill="#5a9a44"/><circle cx="50.0" cy="24.0" r="2.7" fill="#5a9a44"/><circle cx="61.9" cy="100.8" r="1.7" fill="#6aaa4a"/><circle cx="74.4" cy="48.6" r="2.5" fill="#5a9a44"/><circle cx="77.1" cy="21.3" r="2.1" fill="#5a9a44"/><circle cx="50.9" cy="49.9" r="2.2" fill="#5a9a44"/><circle cx="84.7" cy="48.6" r="1.9" fill="#5a9a44"/><circle cx="41.2" cy="59.2" r="2.3" fill="#6aaa4a"/><circle cx="93.4" cy="62.1" r="1.6" fill="#3f7e30"/><circle cx="36.9" cy="43.4" r="2.6" fill="#3f7e30"/><circle cx="51.4" cy="29.0" r="2.1" fill="#3f7e30"/><circle cx="52.2" cy="70.9" r="2.2" fill="#6aaa4a"/><circle cx="109.3" cy="48.5" r="2.8" fill="#3f7e30"/><circle cx="65.0" cy="85.7" r="2.0" fill="#3f7e30"/><circle cx="77.5" cy="69.0" r="1.7" fill="#478a36"/><circle cx="64.1" cy="99.8" r="1.6" fill="#3f7e30"/><circle cx="73.4" cy="55.3" r="1.7" fill="#3f7e30"/><circle cx="92.2" cy="25.7" r="2.7" fill="#6aaa4a"/><circle cx="100.1" cy="64.8" r="2.4" fill="#6aaa4a"/><circle cx="100.4" cy="70.5" r="2.7" fill="#6aaa4a"/><circle cx="56.6" cy="37.8" r="1.8" fill="#478a36"/><circle cx="77.6" cy="34.9" r="2.5" fill="#478a36"/><circle cx="70.4" cy="70.9" r="2.3" fill="#478a36"/><circle cx="104.1" cy="76.2" r="2.1" fill="#5a9a44"/><circle cx="64.0" cy="84.4" r="2.1" fill="#5a9a44"/><circle cx="50.4" cy="34.5" r="2.7" fill="#5a9a44"/><circle cx="100.3" cy="35.2" r="2.5" fill="#3f7e30"/><circle cx="43.0" cy="73.2" r="2.7" fill="#5a9a44"/><circle cx="52.4" cy="97.5" r="1.7" fill="#6aaa4a"/><circle cx="41.4" cy="37.4" r="1.5" fill="#6aaa4a"/><circle cx="68.2" cy="84.4" r="1.5" fill="#6aaa4a"/><circle cx="58.8" cy="54.6" r="1.6" fill="#478a36"/><circle cx="83.5" cy="85.2" r="2.0" fill="#478a36"/><circle cx="75.5" cy="22.9" r="1.6" fill="#6aaa4a"/><circle cx="66.6" cy="54.8" r="1.6" fill="#6aaa4a"/><circle cx="107.3" cy="48.4" r="2.5" fill="#6aaa4a"/><circle cx="55.6" cy="78.6" r="1.6" fill="#6aaa4a"/><circle cx="107.6" cy="44.9" r="2.4" fill="#5a9a44"/><circle cx="72.7" cy="17.0" r="2.4" fill="#6aaa4a"/><circle cx="77.3" cy="29.2" r="1.7" fill="#3f7e30"/><circle cx="103.2" cy="76.5" r="1.6" fill="#5a9a44"/><circle cx="76.8" cy="103.1" r="2.2" fill="#478a36"/><circle cx="83.8" cy="56.8" r="2.5" fill="#6aaa4a"/><circle cx="88.4" cy="21.7" r="2.5" fill="#3f7e30"/><circle cx="75.5" cy="85.0" r="1.6" fill="#6aaa4a"/><circle cx="53.7" cy="16.3" r="1.6" fill="#3f7e30"/><circle cx="72.4" cy="35.7" r="2.6" fill="#6aaa4a"/><circle cx="107.6" cy="55.8" r="2.0" fill="#5a9a44"/><circle cx="99.8" cy="22.2" r="2.3" fill="#6aaa4a"/><circle cx="86.5" cy="67.4" r="1.7" fill="#5a9a44"/><circle cx="47.1" cy="52.7" r="2.6" fill="#478a36"/><circle cx="91.9" cy="70.2" r="2.6" fill="#3f7e30"/><circle cx="95.9" cy="65.5" r="2.2" fill="#3f7e30"/><circle cx="48.2" cy="36.0" r="1.5" fill="#6aaa4a"/><circle cx="96.3" cy="100.1" r="1.9" fill="#478a36"/><circle cx="104.5" cy="42.0" r="2.8" fill="#478a36"/><circle cx="86.9" cy="40.9" r="1.5" fill="#478a36"/><circle cx="47.2" cy="74.4" r="2.5" fill="#5a9a44"/><circle cx="85.0" cy="60.2" r="1.8" fill="#478a36"/><circle cx="94.6" cy="32.2" r="1.6" fill="#478a36"/><circle cx="54.7" cy="76.8" r="1.7" fill="#3f7e30"/><circle cx="95.4" cy="73.3" r="1.5" fill="#5a9a44"/><circle cx="81.5" cy="61.6" r="2.2" fill="#478a36"/><circle cx="106.4" cy="43.3" r="2.4" fill="#6aaa4a"/><circle cx="80.1" cy="103.7" r="2.5" fill="#5a9a44"/><circle cx="59.5" cy="91.7" r="2.6" fill="#5a9a44"/><circle cx="67.0" cy="86.7" r="1.9" fill="#478a36"/><circle cx="95.0" cy="51.8" r="2.4" fill="#3f7e30"/><circle cx="63.3" cy="58.3" r="2.2" fill="#5a9a44"/><circle cx="65.8" cy="75.9" r="1.5" fill="#6aaa4a"/><circle cx="68.6" cy="80.1" r="1.7" fill="#478a36"/><circle cx="104.0" cy="83.0" r="2.6" fill="#6aaa4a"/><circle cx="67.8" cy="47.2" r="1.8" fill="#478a36"/><circle cx="94.7" cy="25.3" r="2.2" fill="#478a36"/><circle cx="78.8" cy="61.4" r="1.7" fill="#5a9a44"/><circle cx="80.7" cy="55.3" r="1.6" fill="#3f7e30"/><circle cx="64.6" cy="81.3" r="1.8" fill="#5a9a44"/><circle cx="104.7" cy="99.3" r="1.6" fill="#3f7e30"/><circle cx="70.0" cy="27.5" r="2.0" fill="#5a9a44"/><circle cx="90.2" cy="38.5" r="2.5" fill="#478a36"/><circle cx="108.9" cy="59.9" r="1.5" fill="#6aaa4a"/><circle cx="59.0" cy="110.3" r="1.6" fill="#6aaa4a"/><circle cx="104.0" cy="31.1" r="1.9" fill="#478a36"/><circle cx="70.3" cy="46.2" r="2.0" fill="#5a9a44"/><circle cx="92.1" cy="74.1" r="1.6" fill="#478a36"/><circle cx="55.5" cy="96.0" r="2.2" fill="#5a9a44"/><circle cx="75.8" cy="64.7" r="1.7" fill="#478a36"/><circle cx="91.2" cy="84.4" r="2.7" fill="#6aaa4a"/><circle cx="61.0" cy="52.5" r="2.1" fill="#3f7e30"/><circle cx="88.2" cy="45.5" r="2.2" fill="#3f7e30"/><circle cx="92.2" cy="102.5" r="2.7" fill="#478a36"/><circle cx="92.1" cy="93.3" r="2.5" fill="#5a9a44"/><circle cx="86.2" cy="20.7" r="2.3" fill="#3f7e30"/><circle cx="81.0" cy="15.8" r="2.7" fill="#478a36"/><circle cx="90.6" cy="44.4" r="1.5" fill="#6aaa4a"/><circle cx="47.6" cy="89.7" r="1.9" fill="#5a9a44"/><circle cx="56.9" cy="56.0" r="1.8" fill="#3f7e30"/><circle cx="83.6" cy="69.6" r="1.6" fill="#5a9a44"/><circle cx="55.0" cy="31.9" r="2.2" fill="#478a36"/><circle cx="104.6" cy="42.9" r="2.1" fill="#3f7e30"/><circle cx="81.8" cy="15.1" r="2.3" fill="#5a9a44"/><circle cx="100.7" cy="21.1" r="1.6" fill="#6aaa4a"/><circle cx="69.2" cy="33.3" r="2.3" fill="#5a9a44"/><circle cx="92.9" cy="98.2" r="2.0" fill="#6aaa4a"/><circle cx="84.9" cy="88.8" r="2.6" fill="#6aaa4a"/><circle cx="79.6" cy="92.5" r="1.7" fill="#3f7e30"/><circle cx="83.4" cy="45.2" r="2.1" fill="#3f7e30"/><circle cx="4.4" cy="68.8" r="1.9" fill="#3a7a2c"/><circle cx="28.7" cy="47.9" r="1.7" fill="#3a7a2c"/><circle cx="13.4" cy="63.5" r="1.8" fill="#357028"/><circle cx="13.0" cy="77.2" r="2.2" fill="#357028"/><circle cx="22.8" cy="85.0" r="2.4" fill="#3a7a2c"/><circle cx="14.5" cy="53.2" r="2.4" fill="#3a7a2c"/><circle cx="18.5" cy="78.3" r="2.0" fill="#4a8a38"/><circle cx="22.0" cy="46.5" r="1.7" fill="#357028"/><circle cx="5.3" cy="76.1" r="2.0" fill="#4a8a38"/><circle cx="4.1" cy="65.3" r="2.2" fill="#357028"/><circle cx="11.4" cy="63.6" r="2.0" fill="#4a8a38"/><circle cx="8.7" cy="78.6" r="1.6" fill="#357028"/><circle cx="12.2" cy="62.7" r="1.7" fill="#357028"/><circle cx="18.6" cy="79.8" r="2.5" fill="#4a8a38"/><circle cx="14.7" cy="51.9" r="2.4" fill="#4a8a38"/><circle cx="14.7" cy="60.4" r="2.2" fill="#4a8a38"/><circle cx="33.6" cy="67.3" r="1.6" fill="#357028"/><circle cx="20.0" cy="68.0" r="2.5" fill="#357028"/><circle cx="29.0" cy="60.3" r="2.5" fill="#4a8a38"/><circle cx="2.4" cy="63.6" r="2.3" fill="#4a8a38"/><circle cx="22.5" cy="79.9" r="1.8" fill="#4a8a38"/><circle cx="10.4" cy="79.5" r="2.2" fill="#4a8a38"/><circle cx="13.5" cy="46.3" r="2.1" fill="#357028"/><circle cx="25.0" cy="84.2" r="1.7" fill="#3a7a2c"/><circle cx="6.6" cy="77.6" r="2.0" fill="#4a8a38"/><circle cx="30.3" cy="68.7" r="1.5" fill="#4a8a38"/><circle cx="3.5" cy="65.9" r="2.4" fill="#357028"/><circle cx="32.8" cy="65.1" r="2.3" fill="#3a7a2c"/><circle cx="19.5" cy="61.0" r="1.7" fill="#3a7a2c"/><circle cx="8.2" cy="74.4" r="1.6" fill="#3a7a2c"/></g><path d="M31 30C36 40 40 46 42 50" stroke="#8ac860" stroke-width="2" fill="none"/></g></svg></div>
<div class="a ob ob1" style="left:2165px;top:725.0px"><span class="a" style="left:6px;top:11px"><svg width="13" height="13" viewBox="0 0 13 13"><path d="M6.5 0.5V12.5M0.5 6.5H12.5" stroke="#fff" stroke-width="2.8"/></svg></span><span class="a" style="left:23px;top:0">查看</span></div>
<div class="a ob ob2" style="left:2231px;top:725.0px"><span class="a" style="left:7px;top:10px"><svg width="15" height="15" viewBox="0 0 15 15"><path d="M7 1.5H1.5V13.5H13.5V8" stroke="#fff" stroke-width="1.3" fill="none"/><path d="M12 1.2L14 3.2L7.5 9.7L5 10.3L5.6 7.7Z" stroke="#fff" stroke-width="1.3" fill="none" stroke-linejoin="round"/></svg></span><span class="a" style="left:26px;top:0">修改</span></div>
<div class="a ob ob3" style="left:2300px;top:725.0px"><span class="a" style="left:6px;top:11px"><svg width="14" height="14" viewBox="0 0 14 14"><path d="M1 3.2H13M5 3V1.2H9V3M2.5 3.5L3.2 13H10.8L11.5 3.5M5.5 5.5V11M8.5 5.5V11" stroke="#fff" stroke-width="1.2" fill="none"/></svg></span><span class="a" style="left:25px;top:0">删除</span></div>
<div class="a rl" style="top:809.5px"></div>
<div class="a cb" style="left:299px;top:868.0px"></div>
<div class="a td" style="left:355px;top:865.5px">4</div>
<div class="a td" style="left:411px;top:865.5px">做个真正的学生</div>
<div class="a td" style="left:720px;top:865.5px">分类名称5</div>
<div class="a td" style="left:1025px;top:865.5px">发布人5</div>
<div class="a td" style="left:1330px;top:865.5px">6</div>
<div class="a td" style="left:1635px;top:865.5px">5</div>
<div class="a pic" style="left:1940px;top:815.5px"><svg width="113" height="112" viewBox="0 0 113 112"><defs><filter id="b4" x="-5%" y="-5%" width="110%" height="110%"><feGaussianBlur stdDeviation="0.7"/></filter></defs><rect width="113" height="112" fill="#72c04e"/><g filter="url(#b4)"><rect width="113" height="112" fill="#66b648"/><rect x="0" y="0" width="113" height="30" fill="#5aae3c"/><path d="M60 10H113V60H96Z" fill="#8ccf70"/><circle cx="100" cy="38" r="5" fill="#b8e0b0"/><circle cx="104" cy="24" r="3" fill="#b0dca0"/><circle cx="88" cy="30" r="3" fill="#a8d898"/><path d="M4 78C2 40 20 8 50 8C76 8 88 36 92 62" stroke="#a05c36" stroke-width="6" fill="none"/><path d="M4 44C40 36 80 42 104 58L110 66L4 70Z" fill="#9a5636"/><path d="M14 30L17 44" stroke="#6a5a78" stroke-width="3"/><path d="M8 48C20 44 40 48 46 56C46 66 30 70 10 70C5 64 5 54 8 48Z" fill="#2a2848"/><path d="M6 62C20 58 44 62 50 70C48 76 28 76 8 74Z" fill="#34305a"/><path d="M44 46C50 36 62 30 72 40C82 46 86 56 80 64C70 68 56 70 46 66Z" fill="#3a9a3c"/><path d="M52 30L62 46M64 40L76 56" stroke="#72c450" stroke-width="3.5"/><path d="M78 58C90 52 108 54 113 58V96C100 100 84 98 76 90Z" fill="#1f4a30"/><path d="M92 64C100 62 106 70 108 84" stroke="#2f6a44" stroke-width="4" fill="none"/><circle cx="68" cy="66" r="10" fill="#f0b88c"/><circle cx="14" cy="80" r="10" fill="#e65a52"/><circle cx="30" cy="73" r="12" fill="#e8604e"/><ellipse cx="41" cy="89" rx="18" ry="13" fill="#e85a48"/><ellipse cx="69" cy="84" rx="15" ry="14" fill="#e64c3a"/><path d="M0 78C20 90 50 100 80 98C96 96 106 92 113 88V112H0Z" fill="#8e4c2c"/><path d="M0 86C20 98 50 106 80 104C96 102 106 98 113 94M0 96C24 106 60 110 113 102" stroke="#b06a40" stroke-width="2" fill="none"/></g></svg></div>
<div class="a ob ob1" style="left:2165px;top:854.5px"><span class="a" style="left:6px;top:11px"><svg width="13" height="13" viewBox="0 0 13 13"><path d="M6.5 0.5V12.5M0.5 6.5H12.5" stroke="#fff" stroke-width="2.8"/></svg></span><span class="a" style="left:23px;top:0">查看</span></div>
<div class="a ob ob2" style="left:2231px;top:854.5px"><span class="a" style="left:7px;top:10px"><svg width="15" height="15" viewBox="0 0 15 15"><path d="M7 1.5H1.5V13.5H13.5V8" stroke="#fff" stroke-width="1.3" fill="none"/><path d="M12 1.2L14 3.2L7.5 9.7L5 10.3L5.6 7.7Z" stroke="#fff" stroke-width="1.3" fill="none" stroke-linejoin="round"/></svg></span><span class="a" style="left:26px;top:0">修改</span></div>
<div class="a ob ob3" style="left:2300px;top:854.5px"><span class="a" style="left:6px;top:11px"><svg width="14" height="14" viewBox="0 0 14 14"><path d="M1 3.2H13M5 3V1.2H9V3M2.5 3.5L3.2 13H10.8L11.5 3.5M5.5 5.5V11M8.5 5.5V11" stroke="#fff" stroke-width="1.2" fill="none"/></svg></span><span class="a" style="left:25px;top:0">删除</span></div>
<div class="a rl" style="top:939.0px"></div>
<div class="a cb" style="left:299px;top:997.5px"></div>
<div class="a td" style="left:355px;top:995.0px">5</div>
<div class="a td" style="left:411px;top:995.0px">在大学给自己定个目标</div>
<div class="a td" style="left:720px;top:995.0px">分类名称4</div>
<div class="a td" style="left:1025px;top:995.0px">发布人4</div>
<div class="a td" style="left:1330px;top:995.0px">5</div>
<div class="a td" style="left:1635px;top:995.0px">4</div>
<div class="a pic" style="left:1940px;top:945.0px"><svg width="113" height="112" viewBox="0 0 113 112"><defs><filter id="b5" x="-5%" y="-5%" width="110%" height="110%"><feGaussianBlur stdDeviation="0.7"/></filter></defs><rect width="113" height="112" fill="#2f6a36"/><g filter="url(#b5)"><rect width="113" height="112" fill="#2f6a36"/><path d="M50 0H113V30C104 26 94 18 86 10C74 6 62 6 50 4Z" fill="#c8e6ee"/><path d="M0 0H50C62 6 74 8 86 12C94 20 104 26 113 30V40C96 38 80 30 60 28C40 26 20 20 0 24Z" fill="#3e8a46"/><path d="M36 38L48 100M44 40L70 100M62 30L80 90M0 60L14 100M4 90L30 112M70 60L90 112M56 80L62 112M30 50L40 80M76 30L96 40" stroke="#4e9e5a" stroke-width="5"/><path d="M0 50C10 52 20 56 24 70" stroke="#3a7a42" stroke-width="4" fill="none"/><path d="M100 86C106 88 112 92 113 96V112H100Z" fill="#a8d860"/><path d="M17 0L17 22M27 0L30 20M52 8L56 22" stroke="#b09a80" stroke-width="1.5"/><circle cx="15" cy="36" r="11" fill="#d44c62"/><circle cx="13.3" cy="34.4" r="6.6" fill="#dc5e72"/><circle cx="29" cy="29" r="10" fill="#d44c62"/><circle cx="27.5" cy="27.5" r="6.0" fill="#dc5e72"/><circle cx="47" cy="29" r="9" fill="#d44c62"/><circle cx="45.6" cy="27.6" r="5.4" fill="#dc5e72"/><circle cx="20" cy="69" r="8" fill="#d44c62"/><circle cx="18.8" cy="67.8" r="4.8" fill="#dc5e72"/><circle cx="53" cy="67" r="8.5" fill="#d44c62"/><circle cx="51.7" cy="65.7" r="5.1" fill="#dc5e72"/><circle cx="67" cy="69" r="5.5" fill="#d44c62"/><circle cx="66.2" cy="68.2" r="3.3" fill="#dc5e72"/><circle cx="26" cy="86" r="6.5" fill="#d44c62"/><circle cx="25.0" cy="85.0" r="3.9" fill="#dc5e72"/><circle cx="12" cy="101" r="11" fill="#d44c62"/><circle cx="10.3" cy="99.3" r="6.6" fill="#dc5e72"/><circle cx="13" cy="110" r="8" fill="#d44c62"/><circle cx="11.8" cy="108.8" r="4.8" fill="#dc5e72"/><circle cx="49" cy="94" r="6.5" fill="#d44c62"/><circle cx="48.0" cy="93.0" r="3.9" fill="#dc5e72"/><circle cx="96" cy="42" r="7.5" fill="#d44c62"/><circle cx="94.9" cy="40.9" r="4.5" fill="#dc5e72"/><circle cx="90" cy="54" r="7.5" fill="#d44c62"/><circle cx="88.9" cy="52.9" r="4.5" fill="#dc5e72"/><circle cx="107" cy="50" r="7" fill="#d44c62"/><circle cx="106.0" cy="49.0" r="4.2" fill="#dc5e72"/><circle cx="98" cy="64" r="7" fill="#d44c62"/><circle cx="97.0" cy="63.0" r="4.2" fill="#dc5e72"/><circle cx="87" cy="70" r="7.5" fill="#d44c62"/><circle cx="85.9" cy="68.9" r="4.5" fill="#dc5e72"/><circle cx="108" cy="63" r="3.5" fill="#d44c62"/><circle cx="107.5" cy="62.5" r="2.1" fill="#dc5e72"/><circle cx="79" cy="82" r="3" fill="#d44c62"/><circle cx="78.5" cy="81.5" r="1.8" fill="#dc5e72"/><circle cx="100" cy="82" r="3" fill="#d44c62"/><circle cx="99.5" cy="81.5" r="1.8" fill="#dc5e72"/><circle cx="106" cy="82" r="3" fill="#d44c62"/><circle cx="105.5" cy="81.5" r="1.8" fill="#dc5e72"/><circle cx="89" cy="95" r="3" fill="#d44c62"/><circle cx="88.5" cy="94.5" r="1.8" fill="#dc5e72"/><circle cx="82" cy="93" r="3" fill="#d44c62"/><circle cx="81.5" cy="92.5" r="1.8" fill="#dc5e72"/><circle cx="93" cy="96" r="3" fill="#d44c62"/><circle cx="92.5" cy="95.5" r="1.8" fill="#dc5e72"/><circle cx="103" cy="100" r="3" fill="#d44c62"/><circle cx="102.5" cy="99.5" r="1.8" fill="#dc5e72"/><circle cx="95" cy="104" r="3" fill="#d44c62"/><circle cx="94.5" cy="103.5" r="1.8" fill="#dc5e72"/><circle cx="91" cy="110" r="3" fill="#d44c62"/><circle cx="90.5" cy="109.5" r="1.8" fill="#dc5e72"/><circle cx="55" cy="108" r="3" fill="#d44c62"/><circle cx="54.5" cy="107.5" r="1.8" fill="#dc5e72"/><circle cx="40" cy="1" r="3" fill="#d44c62"/><circle cx="39.5" cy="0.6" r="1.8" fill="#dc5e72"/></g></svg></div>
<div class="a ob ob1" style="left:2165px;top:984.0px"><span class="a" style="left:6px;top:11px"><svg width="13" height="13" viewBox="0 0 13 13"><path d="M6.5 0.5V12.5M0.5 6.5H12.5" stroke="#fff" stroke-width="2.8"/></svg></span><span class="a" style="left:23px;top:0">查看</span></div>
<div class="a ob ob2" style="left:2231px;top:984.0px"><span class="a" style="left:7px;top:10px"><svg width="15" height="15" viewBox="0 0 15 15"><path d="M7 1.5H1.5V13.5H13.5V8" stroke="#fff" stroke-width="1.3" fill="none"/><path d="M12 1.2L14 3.2L7.5 9.7L5 10.3L5.6 7.7Z" stroke="#fff" stroke-width="1.3" fill="none" stroke-linejoin="round"/></svg></span><span class="a" style="left:26px;top:0">修改</span></div>
<div class="a ob ob3" style="left:2300px;top:984.0px"><span class="a" style="left:6px;top:11px"><svg width="14" height="14" viewBox="0 0 14 14"><path d="M1 3.2H13M5 3V1.2H9V3M2.5 3.5L3.2 13H10.8L11.5 3.5M5.5 5.5V11M8.5 5.5V11" stroke="#fff" stroke-width="1.2" fill="none"/></svg></span><span class="a" style="left:25px;top:0">删除</span></div>
<div class="a rl" style="top:1068.5px"></div>
<div class="a cb" style="left:299px;top:1127.0px"></div>
<div class="a td" style="left:355px;top:1124.5px">6</div>
<div class="a td" style="left:411px;top:1124.5px">留退路就没有出路</div>
<div class="a td" style="left:720px;top:1124.5px">分类名称3</div>
<div class="a td" style="left:1025px;top:1124.5px">发布人3</div>
<div class="a td" style="left:1330px;top:1124.5px">4</div>
<div class="a td" style="left:1635px;top:1124.5px">3</div>
<div class="a pic" style="left:1940px;top:1074.5px"><svg width="113" height="112" viewBox="0 0 113 112"><defs><filter id="b6" x="-5%" y="-5%" width="110%" height="110%"><feGaussianBlur stdDeviation="0.7"/></filter></defs><rect width="113" height="112" fill="#7cbc4a"/><g filter="url(#b6)"><rect width="113" height="112" fill="#7cbf4c"/><rect x="0" y="0" width="113" height="30" fill="#8cc85c"/><circle cx="8" cy="6" r="3" fill="#b0dc80"/><circle cx="30" cy="10" r="2.5" fill="#a8d878"/><circle cx="95" cy="8" r="3" fill="#b0dc80"/><circle cx="105" cy="22" r="3" fill="#a8d878"/><circle cx="6" cy="30" r="3" fill="#b8e090"/><path d="M0 44C8 40 18 44 22 56L20 80H0Z" fill="#4f9c36"/><path d="M0 62C6 58 14 60 18 66L16 80H0Z" fill="#a4d464"/><path d="M25 18C36 10 58 12 68 24L66 46H26Z" fill="#3f8c30"/><path d="M19 62C16 36 28 8 50 5C66 4 78 10 82 30" stroke="#b88c60" stroke-width="4" fill="none"/><circle cx="37" cy="36" r="10" fill="#7cc64a"/><circle cx="35" cy="33" r="4" fill="#a0dc70"/><circle cx="55" cy="37" r="9" fill="#78c046"/><path d="M55 38L64 35L66 44L58 48Z" fill="#e86a40"/><path d="M67 32L78 27L82 38L72 42Z" fill="#f0d850"/><path d="M76 40L96 28L101 33L86 48Z" fill="#3f7a40"/><path d="M22 48C30 44 44 45 48 52L46 62H24Z" fill="#e8e4d8"/><path d="M30 58L46 56L47 66L32 66Z" fill="#d22424"/><path d="M46 50C54 40 76 40 86 50C92 62 88 72 80 74H52C46 68 44 58 46 50Z" fill="#527e58"/><circle cx="58" cy="52" r="3" fill="#6a9a6a"/><circle cx="72" cy="58" r="3" fill="#6a9a6a"/><circle cx="64" cy="66" r="3" fill="#44704a"/><circle cx="80" cy="54" r="3" fill="#44704a"/><path d="M87 36C98 30 113 38 113 50V76H90C86 62 84 46 87 36Z" fill="#3a8a30"/><path d="M6 68C30 60 70 66 104 72L100 92H12Z" fill="#7a5232"/><path d="M8 70C30 64 70 70 102 76M10 76C40 70 70 76 102 82M12 82C40 78 70 82 100 88" stroke="#b89068" stroke-width="1.6" fill="none"/><rect x="0" y="88" width="113" height="24" fill="#4a5a3a"/><path d="M0 80C8 74 20 76 26 84L24 112H0Z" fill="#c41e2a"/><circle cx="21" cy="84" r="8" fill="#e02a22"/><path d="M12 94C18 86 32 86 37 96C38 106 32 112 22 112H12C10 106 10 100 12 94Z" fill="#f2c020"/><path d="M22 88L24 100" stroke="#3a8a2a" stroke-width="2.5"/><circle cx="46" cy="102" r="11" fill="#e23420"/><circle cx="67" cy="90" r="9" fill="#e83a28"/><circle cx="67" cy="103" r="11" fill="#e22e20"/><path d="M78 86C88 80 104 80 108 84V94C96 96 84 96 78 94Z" fill="#3c6c42"/><path d="M80 96C90 92 104 92 108 96V104C96 106 84 106 80 104Z" fill="#386440"/><path d="M86 104C96 100 110 100 113 102V112H86Z" fill="#3a6a42"/><rect x="106" y="76" width="7" height="16" fill="#c02030"/></g></svg></div>
<div class="a ob ob1" style="left:2165px;top:1113.5px"><span class="a" style="left:6px;top:11px"><svg width="13" height="13" viewBox="0 0 13 13"><path d="M6.5 0.5V12.5M0.5 6.5H12.5" stroke="#fff" stroke-width="2.8"/></svg></span><span class="a" style="left:23px;top:0">查看</span></div>
<div class="a ob ob2" style="left:2231px;top:1113.5px"><span class="a" style="left:7px;top:10px"><svg width="15" height="15" viewBox="0 0 15 15"><path d="M7 1.5H1.5V13.5H13.5V8" stroke="#fff" stroke-width="1.3" fill="none"/><path d="M12 1.2L14 3.2L7.5 9.7L5 10.3L5.6 7.7Z" stroke="#fff" stroke-width="1.3" fill="none" stroke-linejoin="round"/></svg></span><span class="a" style="left:26px;top:0">修改</span></div>
<div class="a ob ob3" style="left:2300px;top:1113.5px"><span class="a" style="left:6px;top:11px"><svg width="14" height="14" viewBox="0 0 14 14"><path d="M1 3.2H13M5 3V1.2H9V3M2.5 3.5L3.2 13H10.8L11.5 3.5M5.5 5.5V11M8.5 5.5V11" stroke="#fff" stroke-width="1.2" fill="none"/></svg></span><span class="a" style="left:25px;top:0">删除</span></div>
<div class="a rl" style="top:1198.0px"></div>
<div class="a cb" style="left:299px;top:1256.5px"></div>
<div class="a td" style="left:355px;top:1254.0px">7</div>
<div class="a td" style="left:411px;top:1254.0px">大学就该抓住青春，用汗水实现梦想</div>
<div class="a td" style="left:720px;top:1254.0px">分类名称2</div>
<div class="a td" style="left:1025px;top:1254.0px">发布人2</div>
<div class="a td" style="left:1330px;top:1254.0px">3</div>
<div class="a td" style="left:1635px;top:1254.0px">2</div>
<div class="a pic" style="left:1940px;top:1204.0px"><svg width="113" height="112" viewBox="0 0 113 112"><defs><filter id="b7" x="-5%" y="-5%" width="110%" height="110%"><feGaussianBlur stdDeviation="1.0"/></filter></defs><rect width="113" height="112" fill="#a89a64"/><g filter="url(#b7)"><rect width="113" height="112" fill="#a6a262"/><rect x="80" y="0" width="33" height="30" fill="#9aa060"/><rect x="0" y="20" width="20" height="30" fill="#8ab048"/><path d="M0 0H8L12 30L0 32Z" fill="#b09064"/><path d="M8 0H22L24 22L12 30Z" fill="#6cbc3c"/><path d="M46 0H58L56 80H46Z" fill="#405e26"/><path d="M32 0H46L48 70L36 68Z" fill="#64b232"/><path d="M56 0H64L46 70L38 64Z" fill="#b0de30"/><path d="M57 10L66 0H78L64 60L56 79Z" fill="#5cae2e"/><path d="M70 0H92L78 30L66 38Z" fill="#5aae2c"/><path d="M0 28C8 20 22 24 28 36C32 50 32 66 30 79H0Z" fill="#cfc79a"/><path d="M4 40L8 79M10 34L14 79M16 34L20 79M22 40L26 79" stroke="#e8e2b8" stroke-width="1.6"/><path d="M6 50L10 79M14 50L18 79" stroke="#b89868" stroke-width="1.2"/><path d="M68 36C82 30 100 36 110 48L113 60V112H70C68 90 66 56 68 36Z" fill="#c4bc8c"/><path d="M74 50L78 112M82 46L86 112M96 52L100 112M104 56L108 112" stroke="#e4dcb0" stroke-width="1.6"/><path d="M88 60L96 112" stroke="#b89060" stroke-width="1.5"/><path d="M82 62L110 36L113 40L86 66Z" fill="#4e9e2e"/><path d="M62 40L70 34" stroke="#a05a30" stroke-width="1.2"/><path d="M44 72C50 70 58 72 62 76V112H44Z" fill="#9cca74"/></g></svg></div>
<div class="a ob ob1" style="left:2165px;top:1243.0px"><span class="a" style="left:6px;top:11px"><svg width="13" height="13" viewBox="0 0 13 13"><path d="M6.5 0.5V12.5M0.5 6.5H12.5" stroke="#fff" stroke-width="2.8"/></svg></span><span class="a" style="left:23px;top:0">查看</span></div>
<div class="a ob ob2" style="left:2231px;top:1243.0px"><span class="a" style="left:7px;top:10px"><svg width="15" height="15" viewBox="0 0 15 15"><path d="M7 1.5H1.5V13.5H13.5V8" stroke="#fff" stroke-width="1.3" fill="none"/><path d="M12 1.2L14 3.2L7.5 9.7L5 10.3L5.6 7.7Z" stroke="#fff" stroke-width="1.3" fill="none" stroke-linejoin="round"/></svg></span><span class="a" style="left:26px;top:0">修改</span></div>
<div class="a ob ob3" style="left:2300px;top:1243.0px"><span class="a" style="left:6px;top:11px"><svg width="14" height="14" viewBox="0 0 14 14"><path d="M1 3.2H13M5 3V1.2H9V3M2.5 3.5L3.2 13H10.8L11.5 3.5M5.5 5.5V11M8.5 5.5V11" stroke="#fff" stroke-width="1.2" fill="none"/></svg></span><span class="a" style="left:25px;top:0">删除</span></div>
<div class="a rl" style="top:1327.5px"></div>
</body></html>
